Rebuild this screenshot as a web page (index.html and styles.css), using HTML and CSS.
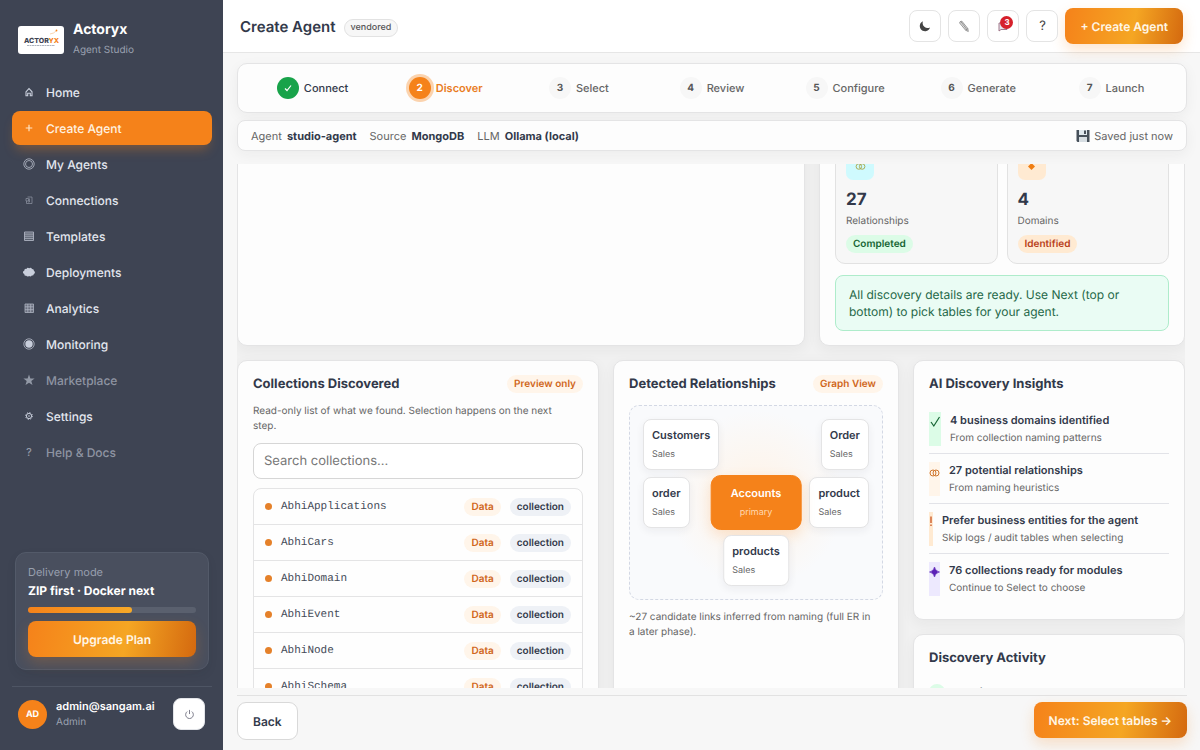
FILE: index.html
```html
<!DOCTYPE html>
<html lang="en">
<head>
<meta charset="utf-8">
<title>Create Agent – Actoryx</title>
<link rel="stylesheet" href="styles.css">
</head>
<body>
<div class="app">
  <aside class="sidebar">
    <div class="brand">
      <svg class="brand-logo" viewBox="0 0 46 28" aria-label="Actoryx logo">
        <rect width="46" height="28" rx="3" fill="#fff"/>
        <text x="6" y="17" font-family="Inter, sans-serif" font-weight="800" font-size="7" fill="#3e4453">ACTOR<tspan fill="#f5821a">YX</tspan></text>
        <path d="M9 19.500h28" stroke="#8b93a3" stroke-width=".7" stroke-dasharray="2 .5"/>
        <path d="M32 8q4-.5 6-3" stroke="#f5b57c" stroke-width=".6" fill="none"/><circle cx="38.500" cy="4.500" r=".9" fill="#f5821a"/>
      </svg>
      <div><div class="brand-name">Actoryx</div><div class="brand-sub">Agent Studio</div></div>
    </div>
    <nav class="nav">
      <a href="#"><svg viewBox="0 0 12 12"><path d="M3 5.800 6 2.600l3 3.200v3.900H7.300V7.200H4.700v2.500H3z" fill="none" stroke="currentColor" stroke-width="1.100"/></svg>Home</a>
      <a href="#" class="active"><svg viewBox="0 0 12 12"><path d="M6 2.700v6.600M2.700 6h6.600" stroke="currentColor" stroke-width="1.200"/></svg>Create Agent</a>
      <a href="#"><svg viewBox="0 0 12 12"><g fill="none" stroke="currentColor" stroke-width=".7"><circle cx="6" cy="6" r="5.200"/><circle cx="6" cy="6" r="3.500"/></g></svg>My Agents</a>
      <a href="#"><svg viewBox="0 0 12 12" opacity=".6"><path d="M4.500 3H9v6.500H3.500V7M3 4.500h2.500V7H3zM6.500 4.500v3.500H5" fill="none" stroke="currentColor" stroke-width=".7"/></svg>Connections</a>
      <a href="#"><svg viewBox="0 0 12 12" opacity=".8"><path d="M1.500 2h9v8.500h-9zM1.500 4.100h9M1.500 6.200h9M1.500 8.300h9" fill="currentColor" fill-opacity=".25" stroke="currentColor" stroke-width=".9"/></svg>Templates</a>
      <a href="#"><svg viewBox="0 0 12 12"><path d="M3.200 9.800A1.700 1.700 0 0 1 1.300 8 1.700 1.700 0 0 1 1.200 4.700 1.900 1.900 0 0 1 3.400 2.900 1.900 1.900 0 0 1 6.200 2.300 1.900 1.900 0 0 1 9 3a1.900 1.900 0 0 1 2 1.900A1.700 1.700 0 0 1 10.800 8 1.700 1.700 0 0 1 8.800 9.500 2 2 0 0 1 6 10a2 2 0 0 1-2.800-.2z" fill="currentColor"/></svg>Deployments</a>
      <a href="#"><svg viewBox="0 0 12 12" opacity=".8"><path d="M2 2h8.500v8.500H2zM4.800 2v8.500M7.700 2v8.500M2 4.800h8.500M2 7.700h8.500" fill="currentColor" fill-opacity=".4" stroke="currentColor" stroke-width=".8"/></svg>Analytics</a>
      <a href="#"><svg viewBox="0 0 12 12"><circle cx="6" cy="6" r="5.200" fill="none" stroke="currentColor" stroke-width=".7"/><circle cx="6" cy="6" r="3.700" fill="currentColor"/></svg>Monitoring</a>
      <a href="#" class="muted"><svg viewBox="0 0 12 12"><path d="m6 .5 1.400 3.900h4.200L8.300 6.900l1.200 4.200L6 8.700l-3.500 2.400 1.200-4.200L.4 4.400h4.200z" fill="currentColor"/></svg>Marketplace</a>
      <a href="#"><svg viewBox="0 0 12 12"><g fill="none" stroke="currentColor"><circle cx="6" cy="6" r="2.600"/><circle cx="6" cy="6" r="3.400" stroke-dasharray="1.200 1.470"/></g><circle cx="6" cy="6" r=".8" fill="currentColor"/></svg>Settings</a>
      <a href="#" class="muted"><span class="nav-glyph">?</span>Help &amp; Docs</a>
    </nav>
    <section class="plan">
      <div class="plan-label">Delivery mode</div>
      <div class="plan-title">ZIP first · Docker next</div>
      <div class="plan-track"><div class="plan-fill" style="width:62%"></div></div>
      <button class="btn-primary plan-btn">Upgrade Plan</button>
    </section>
    <div class="user">
      <div class="avatar">AD</div>
      <div class="user-info"><div class="user-name">admin@sangam.ai</div><div class="user-role">Admin</div></div>
      <button class="power" aria-label="Sign out"><svg viewBox="0 0 12 12"><path d="M3.500 2.800a4.200 4.200 0 1 0 5 0M6 1v4.500" fill="none" stroke="currentColor" stroke-width=".9"/></svg></button>
    </div>
  </aside>

  <div class="main">
    <header class="topbar">
      <h1>Create Agent</h1><span class="tag">vendored</span>
      <div class="actions">
        <button class="icon-btn" aria-label="Dark mode"><svg viewBox="0 0 14 14"><path d="M5 2.200A5.200 5.200 0 1 0 12 8.400 5 5 0 0 1 5 2.200z" fill="currentColor"/></svg></button>
        <button class="icon-btn" aria-label="Edit"><svg viewBox="0 0 14 14"><path d="m3 2.800 1.800-.7 6 7.400.5 3-2.700-1.300-6-7.200zM3.800 2.500l6 8M8.600 11.200l2.200-1.700" fill="#ddd" stroke="#777" stroke-width=".7"/></svg></button>
        <button class="icon-btn" aria-label="Notifications"><svg viewBox="0 0 14 14"><path d="M3 4h8v6.500H5l-2 1.500z" fill="#e4e6ee" stroke="#9a6b80" stroke-width=".9"/></svg><span class="badge">3</span></button>
        <button class="icon-btn" aria-label="Help">?</button>
        <button class="btn-primary">+ Create Agent</button>
      </div>
    </header>

    <div class="workspace">
      <ol class="steps">
        <li class="done"><span class="dot"><svg viewBox="0 0 12 12"><path d="m3 6.500 2 2L9 3.500" fill="none" stroke="#fff" stroke-width="1.200"/></svg></span>Connect</li>
        <li class="current"><span class="dot">2</span>Discover</li>
        <li><span class="dot">3</span>Select</li>
        <li><span class="dot">4</span>Review</li>
        <li><span class="dot">5</span>Configure</li>
        <li><span class="dot">6</span>Generate</li>
        <li><span class="dot">7</span>Launch</li>
      </ol>
      <div class="context">
        <span>Agent <b>studio-agent</b></span><span>Source <b>MongoDB</b></span><span>LLM <b>Ollama (local)</b></span>
        <span class="saved"><svg viewBox="0 0 14 14"><path d="M.5 1h13v12h-12l-1-1z" fill="#46505a"/><path d="M3 1h8v5H3z" fill="#dfe8ee"/><path d="M8 1.500h2V5H8z" fill="#46505a"/><path d="M3 8h8v5H3z" fill="#d6dde2"/></svg>Saved just now</span>
      </div>

      <div class="viewport">
        <div class="content">
          <div class="row-top">
            <section class="card"></section>
            <section class="card summary">
              <div class="stats">
                <div class="stat"><div class="chip cyan"><svg viewBox="0 0 12 12"><g fill="none" stroke="#a9a64a"><circle cx="4.200" cy="6" r="3"/><circle cx="7.800" cy="6" r="3"/></g></svg></div><div class="stat-num">27</div><div class="stat-label">Relationships</div><span class="pill green">Completed</span></div>
                <div class="stat"><div class="chip amber"><svg viewBox="0 0 12 12"><path d="m6 2.200 3.800 3.800L6 9.800 2.200 6z" fill="#ef7d12"/></svg></div><div class="stat-num">4</div><div class="stat-label">Domains</div><span class="pill orange">Identified</span></div>
              </div>
              <div class="notice">All discovery details are ready. Use Next (top or bottom) to pick tables for your agent.</div>
            </section>
          </div>
          <div class="row-bottom">
            <section class="card">
              <div class="card-head"><h2>Collections Discovered</h2><span class="pill pale">Preview only</span></div>
              <p class="lead">Read-only list of what we found. Selection happens on the next step.</p>
              <input class="search" type="search" aria-label="Search collections" placeholder="Search collections...">
              <ul class="list">
                <li><i></i><code>AbhiApplications</code><span class="pill pale">Data</span><span class="pill slate">collection</span></li>
                <li><i></i><code>AbhiCars</code><span class="pill pale">Data</span><span class="pill slate">collection</span></li>
                <li><i></i><code>AbhiDomain</code><span class="pill pale">Data</span><span class="pill slate">collection</span></li>
                <li><i></i><code>AbhiEvent</code><span class="pill pale">Data</span><span class="pill slate">collection</span></li>
                <li><i></i><code>AbhiNode</code><span class="pill pale">Data</span><span class="pill slate">collection</span></li>
                <li><i></i><code>AbhiSchema</code><span class="pill pale">Data</span><span class="pill slate">collection</span></li>
              </ul>
            </section>
            <section class="card">
              <div class="card-head"><h2>Detected Relationships</h2><span class="pill pale">Graph View</span></div>
              <div class="graph">
                <div class="node n-tl"><b>Customers</b><small>Sales</small></div>
                <div class="node n-tr"><b>Order</b><small>Sales</small></div>
                <div class="node n-ml"><b>order</b><small>Sales</small></div>
                <div class="node n-mr"><b>product</b><small>Sales</small></div>
                <div class="node n-center"><b>Accounts</b><small>primary</small></div>
                <div class="node n-bottom"><b>products</b><small>Sales</small></div>
              </div>
              <p class="note">~27 candidate links inferred from naming (full ER in a later phase).</p>
            </section>
            <div class="side">
              <section class="card">
                <div class="card-head"><h2>AI Discovery Insights</h2></div>
                <ul class="insights">
                  <li><span class="mark m-green"><svg viewBox="0 0 12 20"><path d="m2 10 2.800 4L10.500 5" fill="none" stroke="currentColor" stroke-width="1.200"/></svg></span><div><b>4 business domains identified</b><small>From collection naming patterns</small></div></li>
                  <li><span class="mark m-pale"><svg viewBox="0 0 11 20"><g fill="none" stroke="currentColor"><circle cx="4" cy="11" r="3"/><circle cx="7" cy="11" r="3"/></g></svg></span><div><b>27 potential relationships</b><small>From naming heuristics</small></div></li>
                  <li><span class="mark m-amber"><svg viewBox="0 0 4 20"><path d="M2 4.500v6.500M2 12.500v1.500" stroke="currentColor" stroke-width="1.300"/></svg></span><div><b>Prefer business entities for the agent</b><small>Skip logs / audit tables when selecting</small></div></li>
                  <li><span class="mark m-violet"><svg viewBox="0 0 11 20"><path d="M5.500 5q.8 4.200 5 5-4.200.8-5 5-.8-4.200-5-5 4.200-.8 5-5z" fill="currentColor" stroke="currentColor" stroke-width=".6"/></svg></span><div><b>76 collections ready for modules</b><small>Continue to Select to choose</small></div></li>
                </ul>
              </section>
              <section class="card">
                <div class="card-head"><h2>Discovery Activity</h2></div>
                <div class="activity"><span></span><b>Starting scan</b></div>
              </section>
            </div>
          </div>
        </div>
      </div>
      <footer class="footer"><button class="btn-back">Back</button><button class="btn-primary">Next: Select tables →</button></footer>
    </div>
  </div>
</div>
</body>
</html>
```
FILE: styles.css
```css
* { box-sizing: border-box; }
body { margin: 0; font-family: Inter, "Liberation Sans", sans-serif; font-size: 12px; color: #32394a; background: #f7f7f7; text-rendering: geometricPrecision; }
button, input { font: inherit; text-rendering: inherit; }
h1, h2, p, ul, ol { margin: 0; padding: 0; }
ul, ol { list-style: none; }
svg { display: block; flex: none; }

.app { display: flex; height: 100vh; overflow: hidden; }

/* Sidebar */
.sidebar { width: 223px; flex: none; background: #3e4453; padding: 21px 11px 20px 12px; display: flex; flex-direction: column; color: #fff; }
.brand { display: flex; align-items: center; gap: 9px; padding: 0 6px; }
.brand-logo { width: 46px; height: 28px; }
.brand-name { font-size: 14px; font-weight: 700; line-height: 18px; }
.brand-sub { font-size: 10px; line-height: 15px; margin-top: 4px; color: #9aa1b0; }
.nav { display: flex; flex-direction: column; gap: 2px; margin-top: 17px; }
.nav a { display: flex; align-items: center; gap: 11px; height: 34px; padding: 0 11px; border-radius: 8px; color: #e3e7ef; text-decoration: none; font-size: 12px; font-weight: 500; }
.nav svg, .nav-glyph { width: 12px; height: 12px; color: #c8cedb; }
.nav-glyph { font-size: 11px; line-height: 12px; text-align: center; }
.nav .active { background: #f5821a; color: #fff3e2; box-shadow: 0 8px 12px -4px rgba(245, 130, 26, .35); }
.nav .active svg { color: #ffe4c4; }
.nav .muted { color: #8e94a2; }
.nav .muted svg, .nav .muted .nav-glyph { color: #9299a6; }
.plan { margin: auto 3px 0; padding: 12px; border: 1px solid #535a69; border-radius: 11px; background: #494f5e; box-shadow: 0 4px 10px rgba(30, 34, 44, .08); }
.plan-label { font-size: 11px; line-height: 14px; color: #989fae; }
.plan-title { font-size: 12px; line-height: 16px; margin-top: 4px; font-weight: 700; }
.plan-track { height: 6px; margin: 8px 0; border-radius: 3px; background: #5a606e; }
.plan-fill { height: 100%; border-radius: 3px; background: linear-gradient(90deg, #f5821a, #f7a928); }
.btn-primary { height: 36px; padding: 0 15px; border: 0; border-radius: 8px; color: #fff6e6; font-size: 12px; font-weight: 600; background: linear-gradient(100deg, #f5821a 0%, #f5a623 58%, #d4690f 100%); box-shadow: 0 6px 14px rgba(245, 130, 26, .22); }
.plan-btn { width: 100%; }
.user { display: flex; align-items: center; gap: 9px; margin-top: 16px; padding: 11px 7px 0 6px; border-top: 1px solid #4e5564; }
.avatar { width: 29px; height: 29px; border-radius: 50%; background: #f5821a; font-size: 9px; font-weight: 700; display: grid; place-items: center; }
.user-info { flex: 1; min-width: 0; }
.user-name { font-size: 11px; line-height: 16px; font-weight: 600; }
.user-role { font-size: 10px; line-height: 16px; color: #9aa1b0; }
.power { width: 32px; height: 32px; flex: none; padding: 0; border: 1px solid #e2e4e8; border-radius: 8px; background: #fff; color: #667; display: grid; place-items: center; }
.power svg { width: 11px; height: 11px; }

/* Top bar */
.main { flex: 1; min-width: 0; display: flex; flex-direction: column; }
.topbar { height: 53px; flex: none; display: flex; align-items: center; gap: 8px; padding: 0 17px; background: #fff; border-bottom: 1px solid #e6e6e6; }
h1 { font-size: 15px; font-weight: 600; }
.tag { margin-top: 3px; padding: 0 6px; border: 1px solid #e2e2e2; border-radius: 9px; background: #f7f7f7; color: #555; font-size: 9px; font-weight: 500; line-height: 16px; }
.actions { margin-left: auto; display: flex; align-items: center; gap: 7px; }
.icon-btn { position: relative; width: 32px; height: 32px; padding: 0; border: 1px solid #e4e4e4; border-radius: 8px; background: #fff; color: #444; font-size: 13px; display: grid; place-items: center; }
.icon-btn svg { width: 14px; height: 14px; }
.badge { position: absolute; top: 5px; right: 5px; width: 13px; height: 13px; border-radius: 50%; background: #d6202b; color: #fff; font-size: 8px; line-height: 13px; font-weight: 700; }

/* Workspace */
.workspace { flex: 1; min-height: 0; display: flex; flex-direction: column; padding: 10px 13px 0 14px; }
.steps, .context, .card { border: 1px solid #e4e4e5; background: #fdfdfd; box-shadow: 0 4px 14px rgba(30, 34, 44, .05); }
.steps { height: 50px; flex: none; display: flex; align-items: center; padding: 0 8px; border-radius: 10px; font-size: 11px; font-weight: 500; color: #666; }
.steps li { flex: 1; display: flex; align-items: center; justify-content: center; gap: 5px; }
.dot { width: 22px; height: 22px; border-radius: 50%; background: #f7f7f7; display: grid; place-items: center; font-size: 10px; font-weight: 700; color: #555; }
.dot svg { width: 12px; height: 12px; }
.steps .done { color: #32394a; }
.done .dot { background: #18a34a; }
.steps .current { color: #e97c1d; font-weight: 600; }
.current .dot { background: #f5821a; color: #fff; box-shadow: 0 0 0 3px #fbd3ae; }
.context { height: 31px; flex: none; margin-top: 7px; display: flex; align-items: center; gap: 13px; padding: 0 13px; border-radius: 8px; font-size: 11px; color: #666; }
.context b { margin-left: 2px; font-weight: 700; color: #32394a; }
.saved { margin-left: auto; display: flex; align-items: center; gap: 4px; }
.saved svg { width: 14px; height: 14px; }
.viewport { flex: 1; min-height: 0; margin-top: 13px; overflow: hidden; margin-right: 2px; background: #f1f1f1; }
.content { margin-top: -41px; display: grid; gap: 14px; }
.row-top { display: grid; grid-template-columns: 568fr 366fr; gap: 14px; }
.row-bottom { display: grid; grid-template-columns: 362fr 286fr 272fr; gap: 14px; }
.card { border-radius: 10px; padding: 15px; min-width: 0; }
.summary { padding-bottom: 14px; }
.stats { display: grid; grid-template-columns: 1fr 1fr; gap: 9px; }
.stat { padding: 12px 10px 10px; border: 1px solid #e2e2e2; border-radius: 10px; background: #f7f7f7; }
.chip { width: 28px; height: 28px; border-radius: 7px; display: grid; place-items: center; }
.chip svg { width: 11px; height: 11px; }
.cyan { background: #cffafe; }
.amber { background: #ffead2; }
.stat-num { margin-top: 10px; font-size: 17px; line-height: 21px; font-weight: 700; }
.stat-label { margin: 3px 0 6px; font-size: 10px; line-height: 15px; color: #666; }
.pill { display: inline-block; padding: 0 7px; border-radius: 9px; font-size: 10px; line-height: 18px; font-weight: 600; white-space: nowrap; }
.green { background: #dcfce7; color: #166534; }
.orange { background: #ffead2; color: #b9401a; }
.pale { background: #fff5ea; color: #d0661a; }
.slate { background: #eef1f6; color: #32394a; }
.notice { margin-top: 11px; padding: 10px 13px; border: 1px solid #aeeccb; border-radius: 8px; background: #eafcf4; color: #256848; font-size: 12px; line-height: 17px; }
.card-head { display: flex; align-items: center; justify-content: space-between; height: 16px; }
h2 { font-size: 13px; font-weight: 700; }
.lead, .note { font-size: 10px; line-height: 15px; color: #666; }
.lead { margin: 12px 0 9px; padding-right: 16px; }
.note { margin-top: 10px; padding-right: 8px; }
.search { display: block; width: 100%; height: 36px; padding: 0 10px; border: 1px solid #d6d6d6; border-radius: 8px; background: #fff; font-size: 13px; outline: 0; }
.search::placeholder { color: #777; }
.list { margin-top: 9px; border: 1px solid #e4e4e5; border-radius: 8px; background: #fefefe; }
.list li { display: flex; align-items: center; gap: 9px; height: 36px; padding: 0 11px; border-bottom: 1px solid #e4e4e5; }
.list i { width: 7px; height: 7px; border-radius: 50%; background: #e5812a; }
.list code { flex: 1; font: 11px "Liberation Mono", monospace; color: #454b58; }

/* Relationship graph */
.graph { position: relative; height: 195px; margin-top: 13px; border: 1px dashed #d3d8e4; border-radius: 10px; background: radial-gradient(circle at 50% 48%, #fff3e6 0, #f9fafc 55%); }
.node { position: absolute; padding: 7px 8px; border: 1px solid #e4e4e5; border-radius: 8px; background: #fff; box-shadow: 0 3px 8px rgba(30, 34, 44, .06); }
.node b, .node small { display: block; }
.node b { font-size: 11px; line-height: 16px; font-weight: 600; }
.node small { margin-top: 4px; font-size: 9px; line-height: 15px; color: #666; }
.n-tl { left: 13px; top: 13px; }
.n-tr { right: 13px; top: 13px; }
.n-ml { left: 13px; top: 71px; }
.n-mr { right: 13px; top: 71px; }
.n-center { left: 50%; top: 69px; transform: translateX(-50%); padding: 9px 19px; border-color: #f5821a; border-radius: 10px; background: #f5821a; color: #fff; text-align: center; box-shadow: 0 5px 14px rgba(245, 130, 26, .2); }
.n-center small { color: #ffd9b2; }
.n-bottom { left: 50%; top: 129px; transform: translateX(-50%); }

/* Insights */
.side { display: grid; gap: 14px; align-content: start; }
.insights { margin-top: 12px; }
.insights li { display: flex; gap: 9px; padding: 8px 0 7px; border-bottom: 1px solid #e2e3e8; }
.insights li:last-child { border-bottom: 0; padding-bottom: 8px; }
.insights b, .insights small { display: block; }
.insights b { font-size: 11px; line-height: 16px; font-weight: 600; }
.insights small { margin-top: 3px; font-size: 10px; line-height: 15px; color: #666; }
.mark svg { height: 20px; }
.m-green { background: #dcfce7; color: #166534; }
.m-pale { background: #fff5ea; color: #d0762c; }
.m-amber { background: #ffead2; color: #c9501a; }
.m-violet { background: #ede9fe; color: #5b21b6; }
.activity { display: flex; gap: 9px; margin-top: 18px; font-size: 11px; line-height: 16px; }
.activity span { width: 16px; height: 16px; border-radius: 50%; background: #dcfce7; }
.activity b { font-weight: 600; }

/* Footer */
.footer { flex: none; display: flex; justify-content: space-between; align-items: flex-start; height: 55px; margin-top: 7px; padding-top: 6px; border-top: 1px solid #e2e2e2; }
.btn-back { height: 38px; padding: 0 15px; border: 1px solid #d9d9d9; border-radius: 9px; background: #fff; color: #32394a; font-size: 12px; font-weight: 600; }
```
